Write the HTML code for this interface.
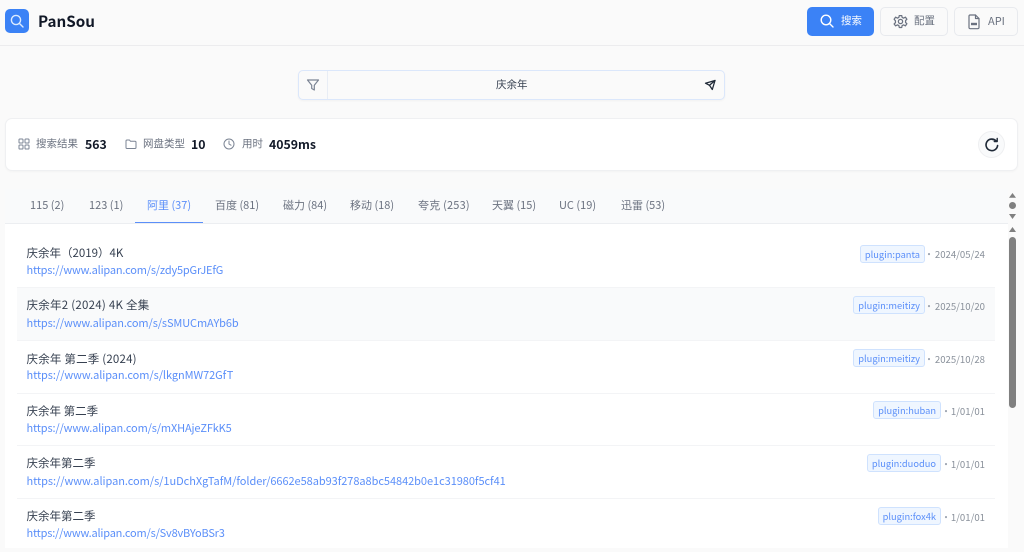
<!DOCTYPE html>
<html><head><meta charset="utf-8">
<style>
*{box-sizing:border-box}
html,body{margin:0;padding:0;width:1024px;height:548px;overflow:hidden;background:#fafafa;font-family:"Noto Sans CJK SC","Liberation Sans",sans-serif;color:#1f2937}
.a{position:absolute;white-space:nowrap;line-height:1}
svg{position:absolute;fill:none;stroke-linecap:round;stroke-linejoin:round}
.btn{position:absolute;top:7px;height:29px;border-radius:5px;background:#fafafa;border:1px solid #e8eaee}
.tab{position:absolute;top:199px;font-size:11px;color:#6b7280;line-height:13px;white-space:nowrap}
.row{position:absolute;left:17px;width:978px;height:53px;border-bottom:1px solid #f3f4f6}
.t{position:absolute;left:9.500px;top:11px;font-size:11.500px;color:#374151;line-height:14px;white-space:nowrap}
.u{position:absolute;left:9.500px;top:29px;font-size:11px;color:#5b8ff9;line-height:14px;white-space:nowrap}
.p{position:absolute;top:8px;height:18px;border:1px solid #cfe2fe;background:#eff6ff;color:#5b8ff9;border-radius:3px;font-size:9.300px;line-height:16px;padding:0 4px;white-space:nowrap}
.d{position:absolute;right:10px;top:12px;font-size:9.600px;color:#8b929c;line-height:12px;white-space:nowrap}
.dot{position:absolute;top:12px;font-size:10px;color:#9ca3af;line-height:12px}
</style></head><body>

<div class="a" style="left:0;top:0;width:1024px;height:46px;border-bottom:1px solid #ececee;background:#fafafa"></div>
<div class="a" style="left:5px;top:9px;width:24px;height:24px;border-radius:5px;background:#3b82f6"></div>
<svg style="left:8px;top:12px" width="18" height="18" viewBox="0 0 18 18" stroke="#dbeafe" stroke-width="1.400"><circle cx="8" cy="8" r="4.600"/><path d="M11.500 11.500L15 15"/></svg>
<div class="a" style="left:38px;top:12px;font-size:15.200px;font-weight:700;color:#111827;line-height:18px">PanSou</div>

<div class="btn" style="left:807px;width:67px;background:#3b82f6;border-color:#3b82f6"></div>
<svg style="left:819px;top:13px" width="16" height="16" viewBox="0 0 16 16" stroke="#fff" stroke-width="1.400"><circle cx="7" cy="7" r="4.800"/><path d="M10.500 10.500L14 14"/></svg>
<div class="a" style="left:841px;top:15px;font-size:10.500px;color:#fff;line-height:12px">搜索</div>

<div class="btn" style="left:880px;width:68px"></div>
<svg style="left:893px;top:14px" width="15" height="15" viewBox="0 0 24 24" stroke="#6b7280" stroke-width="2"><circle cx="12" cy="12" r="3.400"/><path d="M10 2.500h4l.6 3 2.500 1.100 2.700-1.600 2.400 3.400-2.100 2.100v3l2.100 2.100-2.400 3.400-2.700-1.600-2.500 1.100-.6 3h-4l-.6-3-2.500-1.100-2.700 1.600L1.800 16l2.100-2.100v-3L1.800 8.400 4.200 5l2.700 1.600 2.500-1.100z"/></svg>
<div class="a" style="left:914px;top:15px;font-size:10.500px;color:#6b7280;line-height:12px">配置</div>

<div class="btn" style="left:954px;width:64px"></div>
<svg style="left:967px;top:14px" width="14" height="16" viewBox="0 0 14 16" stroke="#6b7280" stroke-width="1.200"><path d="M3 1h5.500L12 4.500V13.500a1.200 1.200 0 0 1-1.200 1.200H3.200A1.200 1.200 0 0 1 2 13.500V2A1 1 0 0 1 3 1z"/><path d="M8.500 1v3.500H12"/><path d="M4 10h6" stroke-width="2.400" stroke-linecap="butt"/></svg>
<div class="a" style="left:988px;top:15px;font-size:11px;color:#6b7280;line-height:12px">API</div>

<div class="a" style="left:298px;top:70px;width:427px;height:30px;border:1px solid #dbe7fb;border-radius:5px;background:#fafafa;box-shadow:0 1px 2px rgba(0,0,0,.04)"></div>
<div class="a" style="left:327px;top:71px;width:1px;height:28px;background:#e8edf5"></div>
<svg style="left:306px;top:78px" width="14" height="14" viewBox="0 0 14 14" stroke="#7b8494" stroke-width="1.200"><path d="M1.500 2h11L8.300 7.200V12L5.700 10.500V7.200z"/></svg>
<div class="a" style="left:496px;top:79px;font-size:10.500px;color:#374151;line-height:12px">庆余年</div>
<svg style="left:703px;top:78px" width="14" height="14" viewBox="0 0 14 14" stroke="#1f2937" stroke-width="1.300"><path d="M12 2.500L2.500 5.200 6.500 7.300 9.300 11.500z"/><path d="M12 2.500L6.500 7.300"/></svg>

<div class="a" style="left:5px;top:118px;width:1013px;height:53px;background:#fff;border:1px solid #eff0f2;border-radius:7px;box-shadow:0 1px 2px rgba(0,0,0,.03)"></div>
<svg style="left:18px;top:138px" width="12" height="12" viewBox="0 0 12 12" stroke="#7b8494" stroke-width="1"><rect x="1" y="1" width="4" height="4" rx=".8"/><rect x="7" y="1" width="4" height="4" rx=".8"/><rect x="1" y="7" width="4" height="4" rx=".8"/><rect x="7" y="7" width="4" height="4" rx=".8"/></svg>
<div class="a" style="left:36px;top:138px;font-size:10.500px;color:#6b7280;line-height:12px">搜索结果</div>
<div class="a" style="left:85px;top:137px;font-size:12.300px;font-weight:700;color:#111827;line-height:14px">563</div>
<svg style="left:125px;top:138px" width="12" height="12" viewBox="0 0 12 12" stroke="#7b8494" stroke-width="1"><path d="M1 3a1 1 0 0 1 1-1h2.500l1 1.300H10a1 1 0 0 1 1 1V9.500a1 1 0 0 1-1 1H2a1 1 0 0 1-1-1z"/></svg>
<div class="a" style="left:143px;top:138px;font-size:10.500px;color:#6b7280;line-height:12px">网盘类型</div>
<div class="a" style="left:191px;top:137px;font-size:12.300px;font-weight:700;color:#111827;line-height:14px">10</div>
<svg style="left:223px;top:138px" width="12" height="12" viewBox="0 0 12 12" stroke="#7b8494" stroke-width="1"><circle cx="6" cy="6" r="5"/><path d="M6 3v3l2 1.200"/></svg>
<div class="a" style="left:242px;top:138px;font-size:10.500px;color:#6b7280;line-height:12px">用时</div>
<div class="a" style="left:269px;top:137px;font-size:12.300px;font-weight:700;color:#111827;line-height:14px">4059ms</div>
<div class="a" style="left:978px;top:131px;width:27px;height:27px;border-radius:50%;background:#f9fafb;border:1px solid #eeeff1"></div>
<svg style="left:984px;top:137px" width="16" height="16" viewBox="0 0 16 16" stroke="#1f2937" stroke-width="1.600"><path d="M13.600 8.500A5.800 5.800 0 1 1 12 3.800C11 2.900 9.500 2.300 8 2.300"/><path d="M13.200 1.500V4.500H10.300" stroke-width="1.400"/></svg>

<div class="a" style="left:5px;top:189px;width:1003px;height:359px;background:#fff"></div>
<div class="a" style="left:5px;top:189px;width:1003px;height:35px;background:#f9fafb;border-bottom:1px solid #eceef1"></div>
<div class="tab" style="left:30px">115 (2)</div>
<div class="tab" style="left:89px">123 (1)</div>
<div class="tab" style="left:147px;color:#5b8ff9">阿里 (37)</div>
<div class="a" style="left:135px;top:222px;width:68px;height:1px;background:#5b8ff9"></div>
<div class="tab" style="left:215px">百度 (81)</div>
<div class="tab" style="left:283px">磁力 (84)</div>
<div class="tab" style="left:350px">移动 (18)</div>
<div class="tab" style="left:418px;letter-spacing:.2px">夸克 (253)</div>
<div class="tab" style="left:492px">天翼 (15)</div>
<div class="tab" style="left:559px">UC (19)</div>
<div class="tab" style="left:621px">迅雷 (53)</div>

<div class="row" style="top:235px"><div class="t">庆余年（2019）4K</div><div class="u" style="top:28px;letter-spacing:-.19px">https://www.alipan.com/s/zdy5pGrJEfG</div><div class="p" style="right:70px;top:10px">plugin:panta</div><div class="d" style="top:13px">2024/05/24</div><div class="dot" style="right:61px;top:13px">·</div></div>
<div class="row" style="top:288px;background:#f9fafb"><div class="t" style="top:10px;letter-spacing:.25px">庆余年2 (2024) 4K 全集</div><div class="u" style="top:28px;letter-spacing:-.11px">https://www.alipan.com/s/sSMUCmAYb6b</div><div class="p" style="right:70px">plugin:meitizy</div><div class="d">2025/10/20</div><div class="dot" style="right:61px">·</div></div>
<div class="row" style="top:341px"><div class="t" style="letter-spacing:.2px">庆余年 第二季 (2024)</div><div class="u" style="top:27px;letter-spacing:-.07px">https://www.alipan.com/s/lkgnMW72GfT</div><div class="p" style="right:70px">plugin:meitizy</div><div class="d">2025/10/28</div><div class="dot" style="right:61px">·</div></div>
<div class="row" style="top:393px"><div class="t">庆余年 第二季</div><div class="u" style="top:28px;letter-spacing:-.15px">https://www.alipan.com/s/mXHAjeZFkK5</div><div class="p" style="right:54px">plugin:huban</div><div class="d">1/01/01</div><div class="dot" style="right:44px">·</div></div>
<div class="row" style="top:446px"><div class="t" style="top:10px">庆余年第二季</div><div class="u" style="top:28px;letter-spacing:-.05px">https://www.alipan.com/s/1uDchXgTafM/folder/6662e58ab93f278a8bc54842b0e1c31980f5cf41</div><div class="p" style="right:54px">plugin:duoduo</div><div class="d">1/01/01</div><div class="dot" style="right:44px">·</div></div>
<div class="row" style="top:499px;border:0"><div class="t" style="top:10px">庆余年第二季</div><div class="u" style="top:27px;letter-spacing:-.2px">https://www.alipan.com/s/Sv8vBYoBSr3</div><div class="p" style="right:54px">plugin:fox4k</div><div class="d">1/01/01</div><div class="dot" style="right:44px">·</div></div>

<svg style="left:1008px;top:192px" width="9" height="41" viewBox="0 0 9 41" stroke="none"><path d="M1 5.800L4.500 1 8 5.800z" fill="#808080"/><circle cx="4.500" cy="13.500" r="3.500" fill="#808080"/><path d="M1 22L4.500 27 8 22z" fill="#808080"/><path d="M1 40L4.500 35 8 40z" fill="#808080"/></svg>
<div class="a" style="left:1009px;top:237px;width:7px;height:171px;border-radius:4px;background:#808080"></div>

</body></html>
